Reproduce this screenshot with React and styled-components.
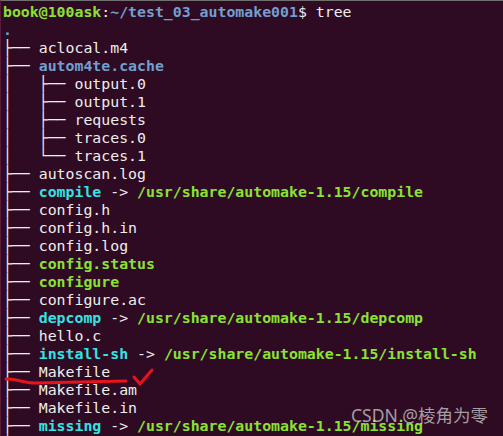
import styled, { createGlobalStyle } from "styled-components";

const GlobalStyle = createGlobalStyle`
  html, body {
    margin: 0;
    padding: 0;
    background: #300a24;
  }
`;

const Terminal = styled.div`
  position: relative;
  width: 503px;
  height: 436px;
  box-sizing: border-box;
  overflow: hidden;
  background: #2e0a23;
  border-top: 1px solid #6f6f6f;
  border-left: 1px solid #5a1a3a;
  padding: 2px 0 0 2px;
  font-family: "DejaVu Sans Mono", "Liberation Mono", monospace;
  font-size: 14.85px;
  line-height: 18px;
  color: #eeeeec;
`;

const Line = styled.div`
  height: 18px;
  white-space: pre;
`;

const colors = {
  plain: "#eeeeec",
  dir: "#729fcf",
  exec: "#8ae234",
  link: "#34e2e2",
};

const Name = styled.span`
  color: ${(p) => colors[p.$kind]};
  font-weight: ${(p) => (p.$kind === "plain" ? "normal" : "bold")};
`;

const Branch = styled.span`
  color: #eeeeec;
`;

const Prompt = styled.span`
  color: ${(p) => p.$color};
  font-weight: bold;
`;

const Marks = styled.svg`
  position: absolute;
  left: 0;
  top: 0;
  pointer-events: none;
`;

const Watermark = styled.div`
  position: absolute;
  left: 350px;
  top: 403px;
  font-family: "Noto Sans", "Noto Sans CJK SC", sans-serif;
  font-size: 17.5px;
  line-height: 22px;
  color: rgba(215, 215, 215, 0.72);
  white-space: nowrap;
`;

const entries = [
  ["├── ", "aclocal.m4", "plain"],
  ["├── ", "autom4te.cache", "dir"],
  ["│   ├── ", "output.0", "plain"],
  ["│   ├── ", "output.1", "plain"],
  ["│   ├── ", "requests", "plain"],
  ["│   ├── ", "traces.0", "plain"],
  ["│   └── ", "traces.1", "plain"],
  ["├── ", "autoscan.log", "plain"],
  ["├── ", "compile", "link", "/usr/share/automake-1.15/compile"],
  ["├── ", "config.h", "plain"],
  ["├── ", "config.h.in", "plain"],
  ["├── ", "config.log", "plain"],
  ["├── ", "config.status", "exec"],
  ["├── ", "configure", "exec"],
  ["├── ", "configure.ac", "plain"],
  ["├── ", "depcomp", "link", "/usr/share/automake-1.15/depcomp"],
  ["├── ", "hello.c", "plain"],
  ["├── ", "install-sh", "link", "/usr/share/automake-1.15/install-sh"],
  ["├── ", "Makefile", "plain"],
  ["├── ", "Makefile.am", "plain"],
  ["├── ", "Makefile.in", "plain"],
  ["├── ", "missing", "link", "/usr/share/automake-1.15/missing"],
  ["│   ", "", "plain"],
];

export default function App() {
  return (
    <>
      <GlobalStyle />
      <Terminal>
        <Line>
          <Prompt $color="#8ae234">book@100ask</Prompt>
          <span>:</span>
          <Prompt $color="#729fcf">~/test_03_automake001</Prompt>
          <span>$ tree</span>
        </Line>
        <Line>
          <Name $kind="dir">.</Name>
        </Line>
        {entries.map(([branch, name, kind, target], i) => (
          <Line key={i}>
            <Branch>{branch}</Branch>
            <Name $kind={kind}>{name}</Name>
            {target && (
              <>
                <span> -&gt; </span>
                <Name $kind="exec">{target}</Name>
              </>
            )}
          </Line>
        ))}
        <Marks width="503" height="436" viewBox="0 0 503 436">
          <path
            d="M5 378 C 14 377, 22 382, 34 382 L 125 380"
            fill="none"
            stroke="#e8141c"
            strokeWidth="3"
            strokeLinecap="round"
          />
          <path
            d="M133 376 L139 383 L151 369"
            fill="none"
            stroke="#e8141c"
            strokeWidth="3"
            strokeLinecap="round"
            strokeLinejoin="round"
          />
        </Marks>
        <Watermark>CSDN @棱角为零</Watermark>
      </Terminal>
    </>
  );
}
